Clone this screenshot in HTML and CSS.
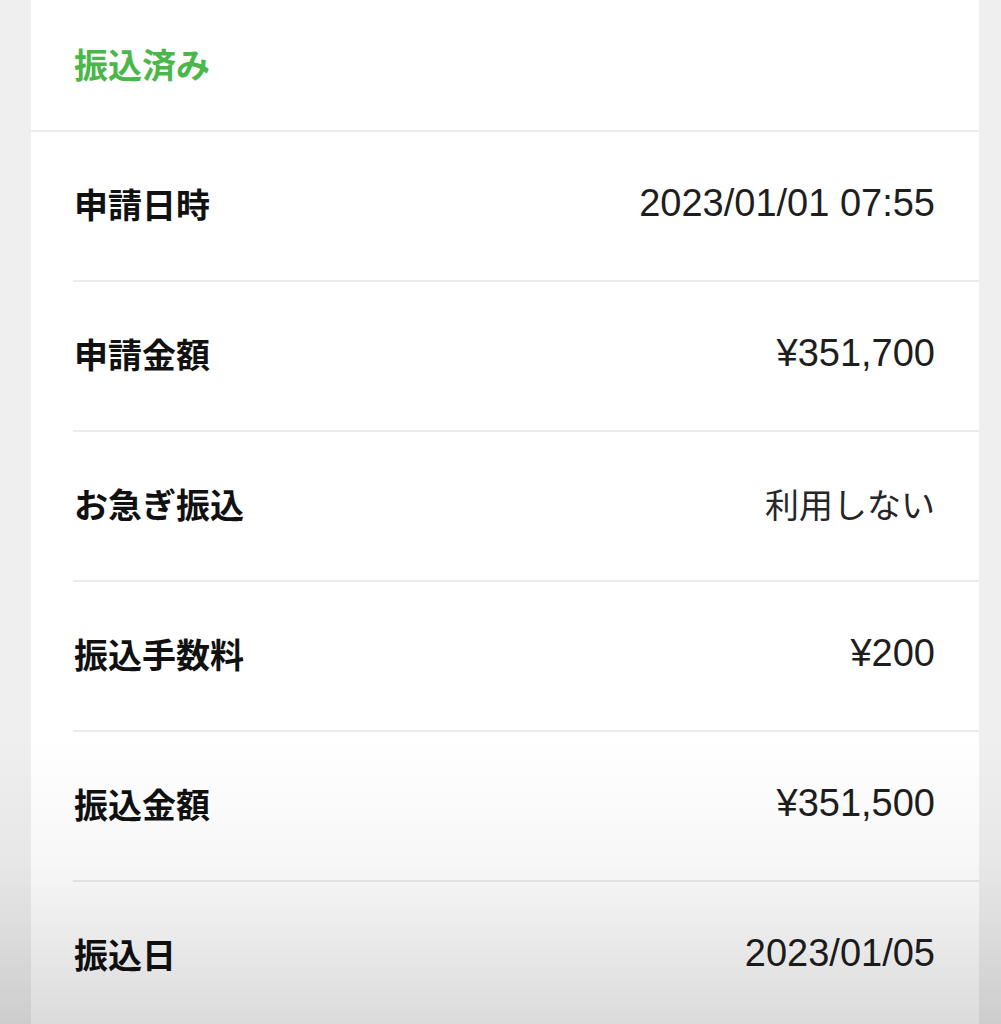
FILE: index.html
```html
<!DOCTYPE html>
<html lang="ja">
<head>
    <meta charset="UTF-8">
    <title>振込申請の詳細</title>
    <link rel="stylesheet" href="styles.css">
</head>
<body>
    <div class="card">
        <div class="status">振込済み</div>
        <ul class="detail-list">
            <li><span class="label">申請日時</span><span class="value">2023/01/01 07:55</span></li>
            <li><span class="label">申請金額</span><span class="value">¥351,700</span></li>
            <li><span class="label">お急ぎ振込</span><span class="value value-text">利用しない</span></li>
            <li><span class="label">振込手数料</span><span class="value">¥200</span></li>
            <li><span class="label">振込金額</span><span class="value">¥351,500</span></li>
            <li><span class="label">振込日</span><span class="value">2023/01/05</span></li>
        </ul>
    </div>
    <div class="shade"></div>
</body>
</html>
```

FILE: styles.css
```css
html,body{margin: 0;padding: 0;}
body{background-color: #efefef;font-family: "Liberation Sans", "Noto Sans CJK JP", sans-serif;color: #1a1a1a;overflow: hidden;height: 1024px;}
ul,li{list-style: none;margin: 0;padding: 0;}
.card{margin: 0 22px 0 31px;background-color: #fff;}
.status{height: 126px;display: flex;align-items: center;padding: 0 0 4px 43px;font-size: 34px;font-weight: 700;color: #4bb74a;font-family: "Noto Sans CJK JP", sans-serif;border-bottom: 2px solid #ececec;}
.detail-list{margin-left: 42px;}
.detail-list li{height: 143px;display: flex;align-items: center;justify-content: space-between;padding: 0 44px 5px 1px;border-top: 2px solid #ebebeb;}
.detail-list li:first-child{border-top: none;}
.label{font-family: "Noto Sans CJK JP", sans-serif;font-size: 34px;font-weight: 700;color: #111;}
.value{font-size: 38px;color: #1e1e1e;}
.value-text{font-size: 34px;font-family: "Noto Sans CJK JP", sans-serif;color: #262626;}
.shade{position: fixed;left: 0;right: 0;bottom: 0;height: 290px;pointer-events: none;background: linear-gradient(to bottom, rgba(0,0,0,0) 0%, rgba(0,0,0,0.03) 45%, rgba(0,0,0,0.14) 100%);}
```
